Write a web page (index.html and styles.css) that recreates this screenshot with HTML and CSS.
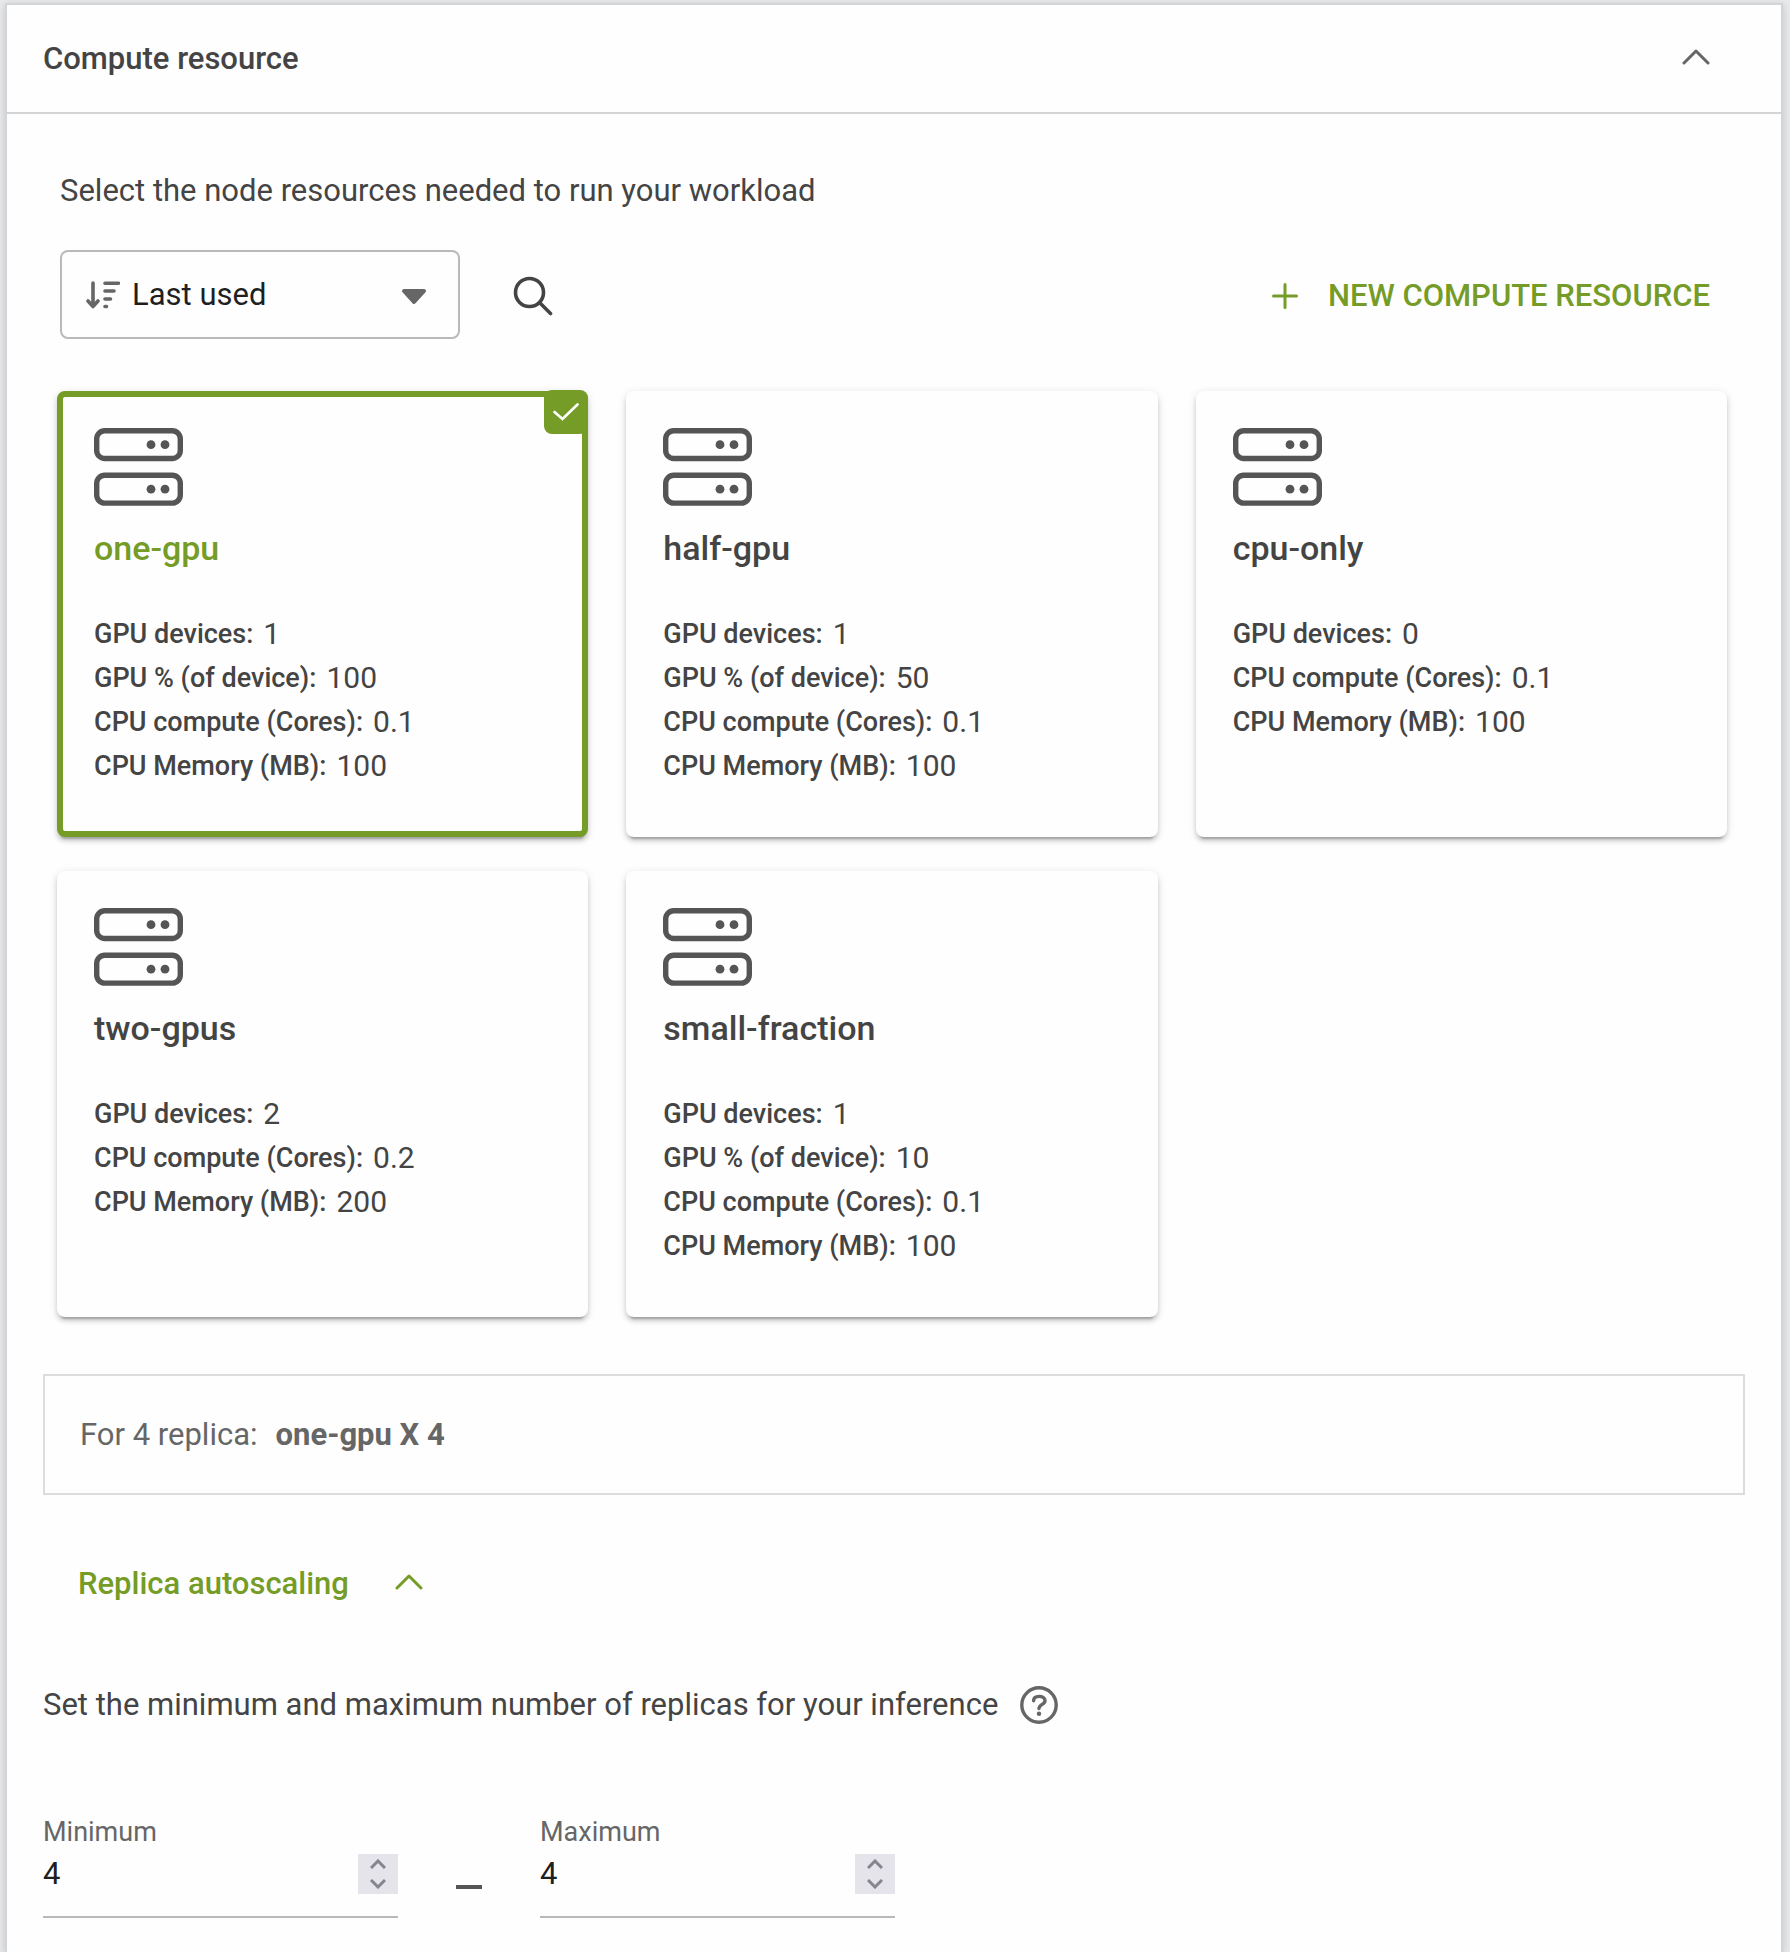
FILE: index.html
```html
<!DOCTYPE html>
<html lang="en">
<head>
    <meta charset="UTF-8">
    <meta name="viewport" content="width=device-width, initial-scale=1.0">
    <title>Compute resource</title>
    <link rel="stylesheet" href="styles.css">
</head>
<body>
    <!-- shared icons -->
    <svg class="sprite" aria-hidden="true">
        <symbol id="chevron-up" viewBox="0 0 28 20">
            <path d="M2 14L14 2L26 14" fill="none" stroke="currentColor" stroke-width="3" stroke-linecap="round" stroke-linejoin="round"/>
        </symbol>
        <symbol id="server" viewBox="0 0 89 78">
            <g fill="none" stroke="currentColor" stroke-width="5.4">
                <rect x="2.7" y="2.7" width="83.6" height="27.8" rx="8"/>
                <rect x="2.7" y="47.3" width="83.6" height="27.8" rx="8"/>
            </g>
            <g fill="currentColor">
                <circle cx="57" cy="16.7" r="4.4"/>
                <circle cx="71" cy="16.7" r="4.4"/>
                <circle cx="57" cy="61.2" r="4.4"/>
                <circle cx="71" cy="61.2" r="4.4"/>
            </g>
        </symbol>
        <symbol id="step-up" viewBox="0 0 16 10">
            <path d="M1 9L8 2L15 9" fill="none" stroke="currentColor" stroke-width="3"/>
        </symbol>
        <symbol id="step-down" viewBox="0 0 16 10">
            <path d="M1 1L8 8L15 1" fill="none" stroke="currentColor" stroke-width="3"/>
        </symbol>
    </svg>

    <main class="panel">
        <header class="panel-header">
            <h1>Compute resource</h1>
            <button type="button" class="icon-button" aria-label="Collapse section">
                <svg class="chevron"><use href="#chevron-up"/></svg>
            </button>
        </header>

        <div class="panel-body">
            <p class="intro">Select the node resources needed to run your workload</p>

            <div class="toolbar">
                <div class="sort">
                    <svg class="sort-icon" viewBox="0 0 34 28" fill="none" stroke="currentColor" stroke-linecap="round" stroke-linejoin="round" aria-hidden="true">
                        <path d="M7 2V25M2 20L7 25.500L12 20" stroke-width="3.600"/>
                        <path d="M19 2.200H32.500M19 10H28M19 18H24.500M19 25.500H20.500" stroke-width="3.600"/>
                    </svg>
                    <select class="sort-select" aria-label="Sort by">
                        <option>Last used</option>
                    </select>
                    <svg class="sort-arrow" viewBox="0 0 26 16" aria-hidden="true">
                        <path d="M3 2H23L13 13Z" fill="currentColor" stroke="currentColor" stroke-width="4" stroke-linejoin="round"/>
                    </svg>
                </div>
                <button type="button" class="icon-button search" aria-label="Search">
                    <svg viewBox="0 0 40 40" fill="none" stroke="currentColor" stroke-width="3.600" stroke-linecap="round">
                        <circle cx="16.500" cy="16.500" r="14"/>
                        <path d="M26.500 26.500L37.500 37.500"/>
                    </svg>
                </button>
                <button type="button" class="new-resource">
                    <svg viewBox="0 0 26 26" fill="none" stroke="currentColor" stroke-width="3" stroke-linecap="round" aria-hidden="true">
                        <path d="M13 1.500V24.500M1.500 13H24.500"/>
                    </svg>
                    NEW COMPUTE RESOURCE
                </button>
            </div>

            <div class="cards">
                <label class="card">
                    <input type="radio" name="resource" value="one-gpu" checked>
                    <span class="badge">
                        <svg viewBox="0 0 26 18"><path d="M1.500 9L9.500 16L24.500 1.500" fill="none" stroke="currentColor" stroke-width="2.600" stroke-linecap="round"/></svg>
                    </span>
                    <svg class="server"><use href="#server"/></svg>
                    <span class="card-title">one-gpu</span>
                    <span class="spec"><b>GPU devices:</b> <span>1</span></span>
                    <span class="spec"><b>GPU % (of device):</b> <span>100</span></span>
                    <span class="spec"><b>CPU compute (Cores):</b> <span>0.1</span></span>
                    <span class="spec"><b>CPU Memory (MB):</b> <span>100</span></span>
                </label>
                <label class="card">
                    <input type="radio" name="resource" value="half-gpu">
                    <svg class="server"><use href="#server"/></svg>
                    <span class="card-title">half-gpu</span>
                    <span class="spec"><b>GPU devices:</b> <span>1</span></span>
                    <span class="spec"><b>GPU % (of device):</b> <span>50</span></span>
                    <span class="spec"><b>CPU compute (Cores):</b> <span>0.1</span></span>
                    <span class="spec"><b>CPU Memory (MB):</b> <span>100</span></span>
                </label>
                <label class="card">
                    <input type="radio" name="resource" value="cpu-only">
                    <svg class="server"><use href="#server"/></svg>
                    <span class="card-title">cpu-only</span>
                    <span class="spec"><b>GPU devices:</b> <span>0</span></span>
                    <span class="spec"><b>CPU compute (Cores):</b> <span>0.1</span></span>
                    <span class="spec"><b>CPU Memory (MB):</b> <span>100</span></span>
                </label>
                <label class="card">
                    <input type="radio" name="resource" value="two-gpus">
                    <svg class="server"><use href="#server"/></svg>
                    <span class="card-title">two-gpus</span>
                    <span class="spec"><b>GPU devices:</b> <span>2</span></span>
                    <span class="spec"><b>CPU compute (Cores):</b> <span>0.2</span></span>
                    <span class="spec"><b>CPU Memory (MB):</b> <span>200</span></span>
                </label>
                <label class="card">
                    <input type="radio" name="resource" value="small-fraction">
                    <svg class="server"><use href="#server"/></svg>
                    <span class="card-title">small-fraction</span>
                    <span class="spec"><b>GPU devices:</b> <span>1</span></span>
                    <span class="spec"><b>GPU % (of device):</b> <span>10</span></span>
                    <span class="spec"><b>CPU compute (Cores):</b> <span>0.1</span></span>
                    <span class="spec"><b>CPU Memory (MB):</b> <span>100</span></span>
                </label>
            </div>

            <div class="summary">For 4 replica: <strong>one-gpu X 4</strong></div>

            <button type="button" class="autoscaling">
                Replica autoscaling
                <svg class="chevron"><use href="#chevron-up"/></svg>
            </button>

            <div class="hint">
                <p>Set the minimum and maximum number of replicas for your inference</p>
                <button type="button" class="icon-button" aria-label="Help">
                    <svg class="help" viewBox="0 0 38 38" fill="none" stroke="currentColor" stroke-width="3.400" stroke-linecap="round">
                        <circle cx="19" cy="19" r="17.200"/>
                        <path d="M13.600 14.800C13.600 11.800 16 10.400 19.200 10.400C22.600 10.400 25 12 25 14.700C25 18.600 19 18.200 19 22.600"/>
                        <circle cx="19" cy="27.800" r="2.200" fill="currentColor" stroke="none"/>
                    </svg>
                </button>
            </div>

            <div class="replicas">
                <div class="field">
                    <label for="min">Minimum</label>
                    <div class="number">
                        <input type="number" id="min" value="4">
                        <div class="stepper">
                            <button type="button" aria-label="Increase minimum"><svg><use href="#step-up"/></svg></button>
                            <button type="button" aria-label="Decrease minimum"><svg><use href="#step-down"/></svg></button>
                        </div>
                    </div>
                </div>
                <span class="dash"></span>
                <div class="field">
                    <label for="max">Maximum</label>
                    <div class="number">
                        <input type="number" id="max" value="4">
                        <div class="stepper">
                            <button type="button" aria-label="Increase maximum"><svg><use href="#step-up"/></svg></button>
                            <button type="button" aria-label="Decrease maximum"><svg><use href="#step-down"/></svg></button>
                        </div>
                    </div>
                </div>
            </div>
        </div>
    </main>
</body>
</html>
```

FILE: styles.css
```css
* {
    margin: 0;
    padding: 0;
    box-sizing: border-box;
}

body {
    display: flex;
    min-height: 100vh;
    padding: 3px 7px 0 5px;
    background-color: #e8e9eb;
    font-family: Roboto, "Liberation Sans", sans-serif;
    font-size: 31px;
    line-height: 36px;
    color: #444;
}

button,
input,
select {
    font: inherit;
    color: inherit;
    border: none;
    background: none;
}

button {
    cursor: pointer;
}

svg {
    display: block;
}

.sprite {
    position: absolute;
    width: 0;
    height: 0;
}

.panel {
    flex: 1;
    min-width: 0;
    background-color: #fefefe;
    border: 2px solid #d3d4d6;
    border-bottom: none;
    box-shadow: 0 2px 8px rgba(0, 0, 0, 0.16);
}

.panel-header {
    display: flex;
    justify-content: space-between;
    align-items: center;
    height: 109px;
    padding: 0 71px 0 36px;
    border-bottom: 2px solid #d3d4d6;
}

.panel-header h1 {
    font-size: 31px;
    font-weight: 500;
}

.icon-button {
    color: #666;
}

.chevron {
    width: 28px;
    height: 20px;
}

.panel-body {
    padding: 59px 36px 34px;
}

.intro {
    padding-left: 17px;
}

.toolbar {
    display: flex;
    align-items: center;
    margin-top: 41px;
    padding: 0 35px 0 17px;
}

.sort {
    position: relative;
    width: 400px;
}

.sort-select {
    display: block;
    width: 100%;
    height: 89px;
    padding: 0 60px 0 70px;
    border: 2px solid #b9b9b9;
    border-radius: 8px;
    appearance: none;
    color: #1f1f1f;
}

/* icons laid over the select box */
.sort-icon {
    position: absolute;
    left: 26px;
    top: 31px;
    width: 34px;
    height: 28px;
    color: #666;
    pointer-events: none;
}

.sort-arrow {
    position: absolute;
    right: 33px;
    top: 39px;
    width: 26px;
    height: 16px;
    color: #666;
    pointer-events: none;
}

.search,
.new-resource {
    padding-top: 3px;
}

.search {
    margin-left: 53px;
    color: #444;
}

.search svg {
    width: 40px;
    height: 40px;
}

.new-resource {
    display: flex;
    align-items: center;
    gap: 30px;
    margin-left: auto;
    font-weight: 500;
    color: #759c26;
}

.new-resource svg {
    width: 26px;
    height: 26px;
}

.cards {
    display: grid;
    grid-template-columns: repeat(3, 1fr);
    gap: 34px 38px;
    margin-top: 52px;
    padding: 0 18px 0 14px;
}

.card {
    position: relative;
    display: flex;
    flex-direction: column;
    min-height: 446px;
    padding: 37px;
    border-radius: 8px;
    background-color: #fefefe;
    box-shadow: 0 6px 2px -4px rgba(0, 0, 0, 0.2), 0 4px 4px rgba(0, 0, 0, 0.14), 0 2px 10px rgba(0, 0, 0, 0.12);
    cursor: pointer;
}

.card input {
    position: absolute;
    opacity: 0;
}

.card:has(input:checked) {
    padding: 31px;
    border: 6px solid #759c26;
}

.card:has(input:checked) .card-title {
    color: #759c26;
}

.badge {
    position: absolute;
    top: -7px;
    right: -6px;
    display: flex;
    align-items: center;
    justify-content: center;
    width: 44px;
    height: 44px;
    border-radius: 8px;
    background-color: #759c26;
    color: #fff;
}

.badge svg {
    width: 26px;
    height: 18px;
}

.server {
    width: 89px;
    height: 78px;
    color: #555;
}

.card-title {
    margin: 22px 0 44px;
    font-size: 34px;
    font-weight: 500;
    line-height: 40px;
}

.spec {
    display: flex;
    align-items: center;
    gap: 10px;
    font-size: 30px;
    line-height: 44px;
}

.spec b {
    font-size: 27px;
    font-weight: 500;
}

.summary {
    display: flex;
    align-items: center;
    gap: 18px;
    height: 121px;
    margin-top: 57px;
    padding: 0 35px;
    border: 2px solid #dcdcdc;
    color: #666;
}

.autoscaling {
    display: flex;
    align-items: center;
    gap: 46px;
    margin: 71px 0 0 35px;
    font-weight: 500;
    color: #759c26;
}

.hint {
    display: flex;
    align-items: center;
    gap: 22px;
    margin-top: 84px;
}

.help {
    width: 38px;
    height: 38px;
}

.replicas {
    display: flex;
    align-items: flex-end;
    margin-top: 93px;
}

.field {
    width: 355px;
}

.field label {
    display: block;
    font-size: 27px;
    line-height: 30px;
    color: #666;
}

.number {
    display: flex;
    align-items: center;
    height: 71px;
    padding-bottom: 16px;
    border-bottom: 2px solid #b9b9b9;
}

.number input {
    flex: 1;
    min-width: 0;
    outline: none;
    color: #1f1f1f;
    appearance: textfield;
}

.number input::-webkit-inner-spin-button {
    display: none;
}

.stepper {
    display: flex;
    flex-direction: column;
    width: 40px;
    height: 40px;
    background-color: #e4e4ea;
    color: #85858f;
}

.stepper button {
    display: flex;
    flex: 1;
    align-items: center;
    justify-content: center;
}

.stepper svg {
    width: 16px;
    height: 10px;
}

.dash {
    width: 26px;
    height: 4px;
    margin: 0 58px 29px;
    background-color: #555;
}
```
